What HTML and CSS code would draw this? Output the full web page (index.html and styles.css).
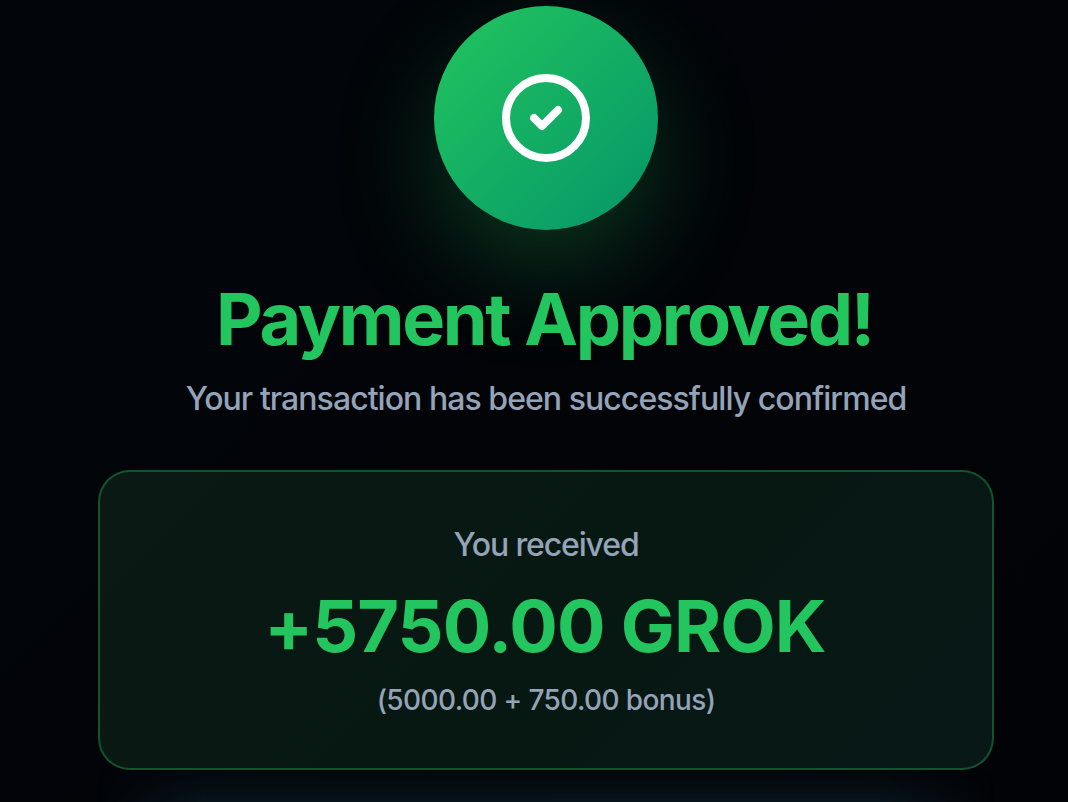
FILE: index.html
```html
<!DOCTYPE html>
<html lang="en">
<head>
<meta charset="UTF-8">
<title>Payment Approved</title>
<meta name="viewport" content="width=device-width, initial-scale=1.0" />
<link rel="stylesheet" href="styles.css">
</head>
<body>
<div class="container">
  <div class="success-icon">
    <svg viewBox="0 0 24 24" fill="none" stroke="currentColor" stroke-width="2" stroke-linecap="round" stroke-linejoin="round">
      <circle cx="12" cy="12" r="10"/>
      <path d="m9 12 2 2 4-4"/>
    </svg>
  </div>
  <h1 class="title">Payment Approved!</h1>
  <p class="subtitle">Your transaction has been successfully confirmed</p>
  <div class="amount-card">
    <p class="label">You received</p>
    <p class="amount">+5750.00 GROK</p>
    <p class="bonus">(5000.00 + 750.00 bonus)</p>
  </div>
  <div class="glow"></div>
</div>
</body>
</html>
```

FILE: styles.css
```css
* {
  box-sizing: border-box;
}
body, html {
  height: 100%;
  margin: 0;
  font-family: Inter, sans-serif;
}
body {
  background: linear-gradient(135deg, #02060a 0%, #020408 50%, #020306 100%);
}
h1, p {
  margin: 0;
}
.container {
  display: flex;
  flex-direction: column;
  align-items: center;
  height: 100%;
  padding: 6px 74px 0 98px;
  text-align: center;
}
.success-icon {
  display: flex;
  align-items: center;
  justify-content: center;
  width: 224px;
  height: 224px;
  border-radius: 50%;
  color: white;
  background: linear-gradient(135deg, #22c55e, #059669);
  box-shadow: 0 40px 100px rgba(34, 197, 94, 0.25);
}
.success-icon svg {
  width: 96px;
  height: 96px;
}
.title {
  margin-top: 47px;
  padding-right: 3px;
  font-size: 72px;
  line-height: 84px;
  font-weight: 700;
  letter-spacing: -2.3px;
  color: #22c55e;
}
.subtitle {
  margin-top: 14px;
  font-size: 32px;
  line-height: 48px;
  font-weight: 450;
  letter-spacing: -0.95px;
  color: #94a3b8;
}
.amount-card {
  width: 100%;
  height: 300px;
  margin-top: 47px;
  padding-top: 49px;
  border: 2px solid rgba(34, 197, 94, 0.35);
  border-radius: 32px;
  background: linear-gradient(135deg, #0a1914 0%, #071711 50%, #081817 100%);
}
.label {
  font-size: 32px;
  line-height: 48px;
  font-weight: 450;
  letter-spacing: -1.15px;
  color: #94a3b8;
}
.amount {
  margin-top: 13px;
  padding-right: 2px;
  font-size: 72px;
  line-height: 88px;
  font-weight: 700;
  letter-spacing: -0.9px;
  color: #22c55e;
}
.bonus {
  margin-top: 9px;
  font-size: 28px;
  line-height: 42px;
  font-weight: 450;
  letter-spacing: -0.62px;
  color: #94a3b8;
}
/* light fading in under the card */
.glow {
  flex: 1;
  width: 100%;
  background: linear-gradient(to bottom, rgba(7, 19, 26, 0.2), #07131a);
  -webkit-mask-image: linear-gradient(to right, transparent, #000 12%, #000 88%, transparent);
  mask-image: linear-gradient(to right, transparent, #000 12%, #000 88%, transparent);
}
```
